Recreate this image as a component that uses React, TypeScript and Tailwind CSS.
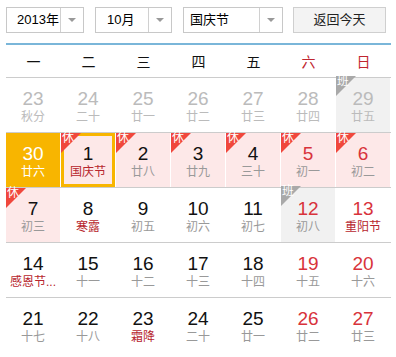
import React from 'react'

type Day = {
  d: number
  lunar: string
  past?: boolean
  today?: boolean
  selected?: boolean
  rest?: boolean
  work?: boolean
  festival?: boolean
  weekend?: boolean
}

const weeks: Day[][] = [
  [
    { d: 23, lunar: '秋分', past: true },
    { d: 24, lunar: '二十', past: true },
    { d: 25, lunar: '廿一', past: true },
    { d: 26, lunar: '廿二', past: true },
    { d: 27, lunar: '廿三', past: true },
    { d: 28, lunar: '廿四', past: true, weekend: true },
    { d: 29, lunar: '廿五', past: true, weekend: true, work: true },
  ],
  [
    { d: 30, lunar: '廿六', today: true },
    { d: 1, lunar: '国庆节', selected: true, rest: true, festival: true },
    { d: 2, lunar: '廿八', rest: true },
    { d: 3, lunar: '廿九', rest: true },
    { d: 4, lunar: '三十', rest: true },
    { d: 5, lunar: '初一', rest: true, weekend: true },
    { d: 6, lunar: '初二', rest: true, weekend: true },
  ],
  [
    { d: 7, lunar: '初三', rest: true },
    { d: 8, lunar: '寒露', festival: true },
    { d: 9, lunar: '初五' },
    { d: 10, lunar: '初六' },
    { d: 11, lunar: '初七' },
    { d: 12, lunar: '初八', work: true, weekend: true },
    { d: 13, lunar: '重阳节', festival: true, weekend: true },
  ],
  [
    { d: 14, lunar: '感恩节...', festival: true },
    { d: 15, lunar: '十一' },
    { d: 16, lunar: '十二' },
    { d: 17, lunar: '十三' },
    { d: 18, lunar: '十四' },
    { d: 19, lunar: '十五', weekend: true },
    { d: 20, lunar: '十六', weekend: true },
  ],
  [
    { d: 21, lunar: '十七' },
    { d: 22, lunar: '十八' },
    { d: 23, lunar: '霜降', festival: true },
    { d: 24, lunar: '二十' },
    { d: 25, lunar: '廿一' },
    { d: 26, lunar: '廿二', weekend: true },
    { d: 27, lunar: '廿三', weekend: true },
  ],
]

const weekdays = ['一', '二', '三', '四', '五', '六', '日']

function Select({ label, width, pad }: { label: string; width: string; pad: string }) {
  return (
    <div className={`flex h-[26px] shrink-0 border border-[#c8c8c8] bg-white ${width}`}>
      <div className={`flex min-w-0 flex-1 items-center whitespace-nowrap ${pad} text-[13px] text-black`}>{label}</div>
      <div className="flex w-[23px] shrink-0 items-center justify-center border-l border-[#d0d0d0]">
        <div className="h-0 w-0 border-x-[4px] border-t-[4px] border-x-transparent border-t-[#999]" />
      </div>
    </div>
  )
}

function Cell({ day }: { day: Day }) {
  let box = 'bg-white'
  if (day.today) box = 'bg-[#f8b500]'
  else if (day.selected) box = 'bg-[#fde8e8] border-[3px] border-[#f8b500]'
  else if (day.rest) box = 'bg-[#fde8e8]'
  else if (day.work) box = 'bg-[#f1f1f1]'

  let numColor = 'text-[#111]'
  if (day.past) numColor = 'text-[#bbb]'
  else if (day.today) numColor = 'text-white'
  else if (day.weekend) numColor = 'text-[#d8333b]'

  let lunarColor = 'text-[#999]'
  if (day.past) lunarColor = 'text-[#bbb]'
  else if (day.today) lunarColor = 'text-white'
  else if (day.festival) lunarColor = 'text-[#b7262e]'

  return (
    <div className="relative h-[54px] w-[55px] pr-px">
      <div
        className={`flex h-full w-full flex-col items-center ${day.selected ? 'pt-[8px]' : 'pt-[11px]'} ${box}`}
      >
        <div className={`text-[19px] leading-[20px] ${numColor}`}>{day.d}</div>
        <div className={`whitespace-nowrap text-[12px] leading-[16px] ${lunarColor}`}>{day.lunar}</div>
      </div>
      {day.rest && (
        <div className="absolute left-0 top-0 h-[20px] w-[20px]">
          <div className="absolute inset-0 bg-[#f0473c] [clip-path:polygon(0_0,100%_0,0_100%)]" />
          <span className="absolute left-px top-[-2px] text-[12px] leading-[14px] text-white">休</span>
        </div>
      )}
      {day.work && (
        <div className="absolute left-0 top-[-2px] h-[20px] w-[20px]">
          <div className="absolute inset-0 bg-[#a9a9a9] [clip-path:polygon(0_0,100%_0,0_100%)]" />
          <span className="absolute left-px top-[-2px] text-[12px] leading-[14px] text-white">班</span>
        </div>
      )}
    </div>
  )
}

export default function App() {
  return (
    <div className="h-[357px] w-[396px] bg-white font-['Liberation_Sans','Noto_Sans_CJK_SC',sans-serif]">
      <div className="flex items-center pl-[6px] pt-[7px]">
        <Select label="2013年" width="w-[78px]" pad="pl-[10px]" />
        <div className="w-[11px] shrink-0" />
        <Select label="10月" width="w-[77px]" pad="pl-[11px]" />
        <div className="w-[11px] shrink-0" />
        <Select label="国庆节" width="w-[100px]" pad="pl-[6px]" />
        <div className="w-[10px] shrink-0" />
        <button className="h-[26px] w-[93px] shrink-0 border border-[#cfcfcf] bg-[#f3f3f3] text-[13px] text-[#222]">
          返回今天
        </button>
      </div>

      <div className="ml-[6px] mt-[10px] w-[385px]">
        <div className="grid h-[35px] grid-cols-7 items-center border-b border-t-2 border-b-[#ccc] border-t-[#7ab6d9] pt-[2px]">
          {weekdays.map((w, i) => (
            <div key={w} className={`text-center text-[14px] ${i >= 5 ? 'text-[#c0262f]' : 'text-[#111]'}`}>
              {w}
            </div>
          ))}
        </div>

        {weeks.map((week, wi) => (
          <div
            key={wi}
            className={`flex ${wi < weeks.length - 1 ? 'border-b border-[#ccc]' : ''}`}
          >
            {week.map((day, di) => (
              <Cell key={di} day={day} />
            ))}
          </div>
        ))}
      </div>
    </div>
  )
}
